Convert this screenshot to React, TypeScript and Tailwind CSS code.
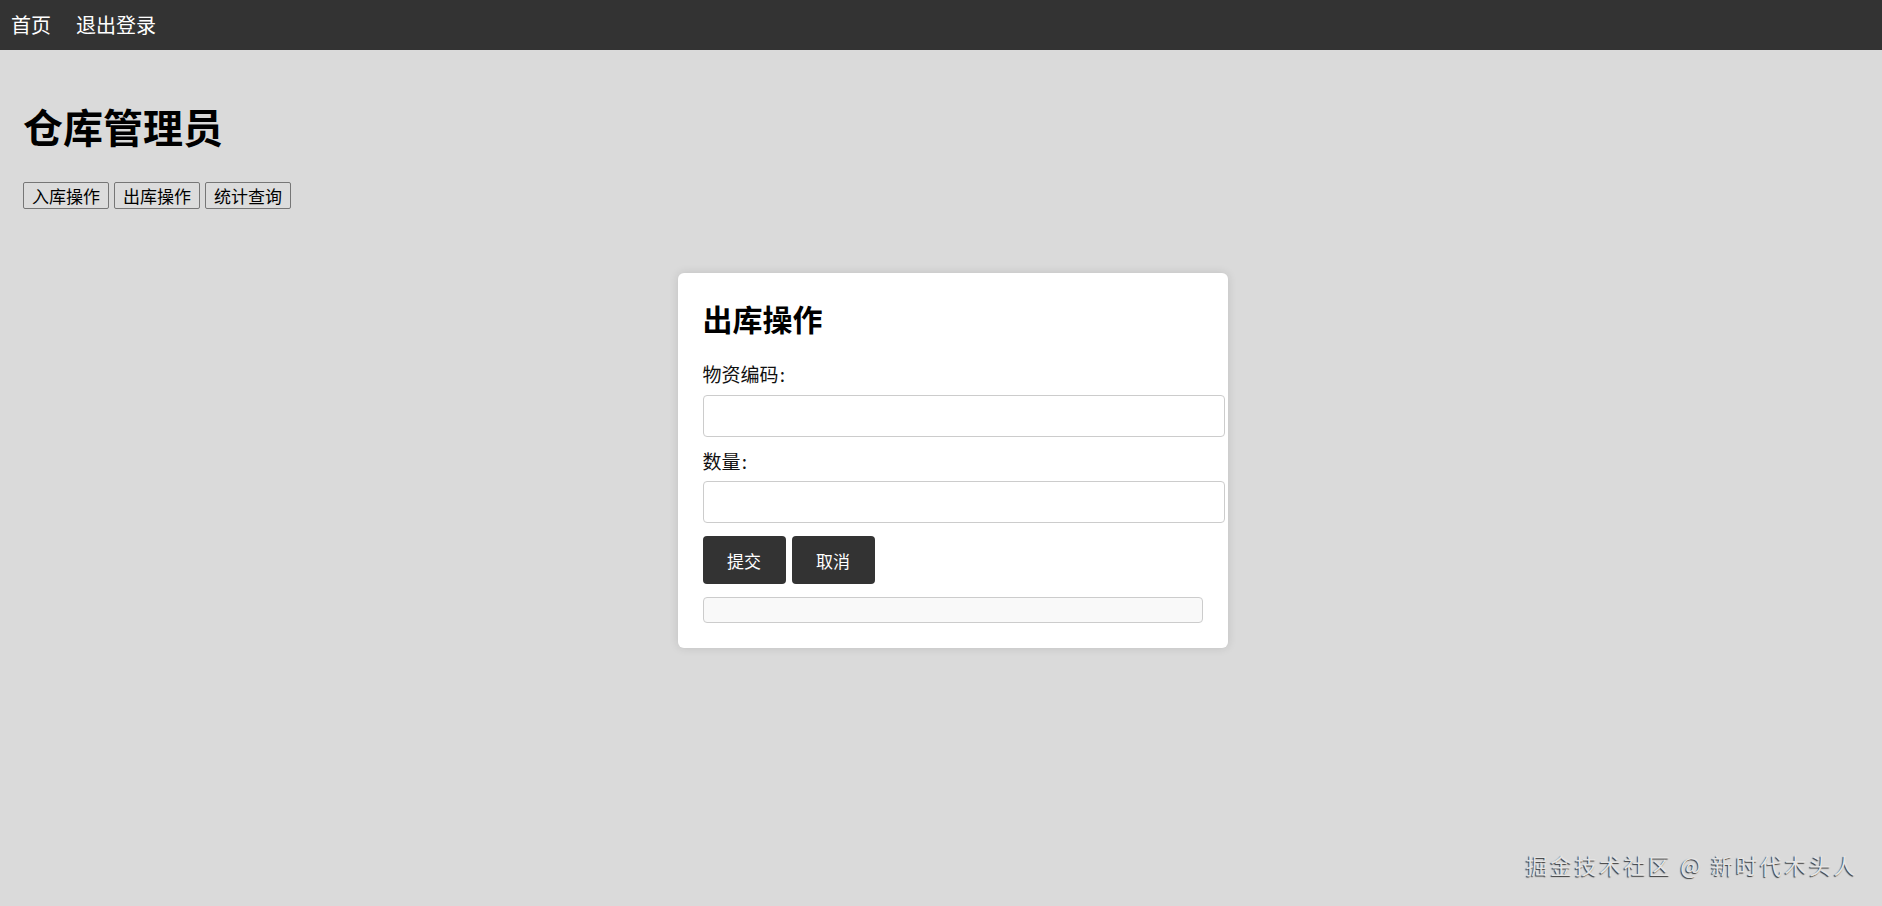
import React from "react";

const font = "font-['Noto_Sans_CJK_SC',_'Noto_Sans',_sans-serif]";

export default function App() {
  return (
    <div
      className={`relative h-[906px] w-full overflow-hidden bg-[#dadada] text-black ${font}`}
    >
      <nav className="flex h-[50px] items-center gap-[25px] bg-[#333333] pl-[11px]">
        <a className="text-[20px] leading-none text-white">首页</a>
        <a className="text-[20px] leading-none text-white">退出登录</a>
      </nav>

      <div className="pl-[23px]">
        <h1 className="mt-[56px] text-[40px] font-bold leading-[40px]">仓库管理员</h1>
        <div className="mt-[36px] flex gap-[5px]">
          {["入库操作", "出库操作", "统计查询"].map((t) => (
            <button
              key={t}
              className="h-[27px] rounded-[2px] border border-[#767676] bg-[#dcdcdc] px-[8px] text-[17px] leading-none text-black"
            >
              {t}
            </button>
          ))}
        </div>

        <div className="mt-[64px] flex justify-center">
          <div className="w-[550px] rounded-[6px] bg-white p-[25px] shadow-[0_0_10px_rgba(0,0,0,0.12)]">
            <h2 className="h-[40px] text-[30px] font-bold leading-[40px]">出库操作</h2>
            <div className="mt-[22px] text-[19px] leading-[28px] text-[#111]">物资编码&#8202;:</div>
            <input
              className="mt-[7px] block h-[42px] w-[522px] rounded-[4px] border border-[#cccccc] bg-white px-[10px] outline-none"
              type="text"
            />
            <div className="mt-[10px] text-[19px] leading-[28px] text-[#111]">数量&#8202;:</div>
            <input
              className="mt-[6px] block h-[42px] w-[522px] rounded-[4px] border border-[#cccccc] bg-white px-[10px] outline-none"
              type="text"
            />
            <div className="mt-[13px] flex gap-[6px]">
              <button className="h-[48px] w-[83px] rounded-[4px] bg-[#333333] text-[17px] leading-none text-white">
                提交
              </button>
              <button className="h-[48px] w-[83px] rounded-[4px] bg-[#333333] text-[17px] leading-none text-white">
                取消
              </button>
            </div>
            <div className="mt-[13px] h-[26px] w-[500px] rounded-[4px] border border-[#cccccc] bg-[#f9f9f9]" />
          </div>
        </div>
      </div>

      <div className="absolute bottom-[31px] right-[24px] text-[22px] leading-[22px] tracking-[2.5px] text-[#e4e4e4] [text-shadow:-1px_1px_1px_rgba(0,0,0,0.75)]">
        掘金技术社区 @ 新时代木头人
      </div>
    </div>
  );
}
